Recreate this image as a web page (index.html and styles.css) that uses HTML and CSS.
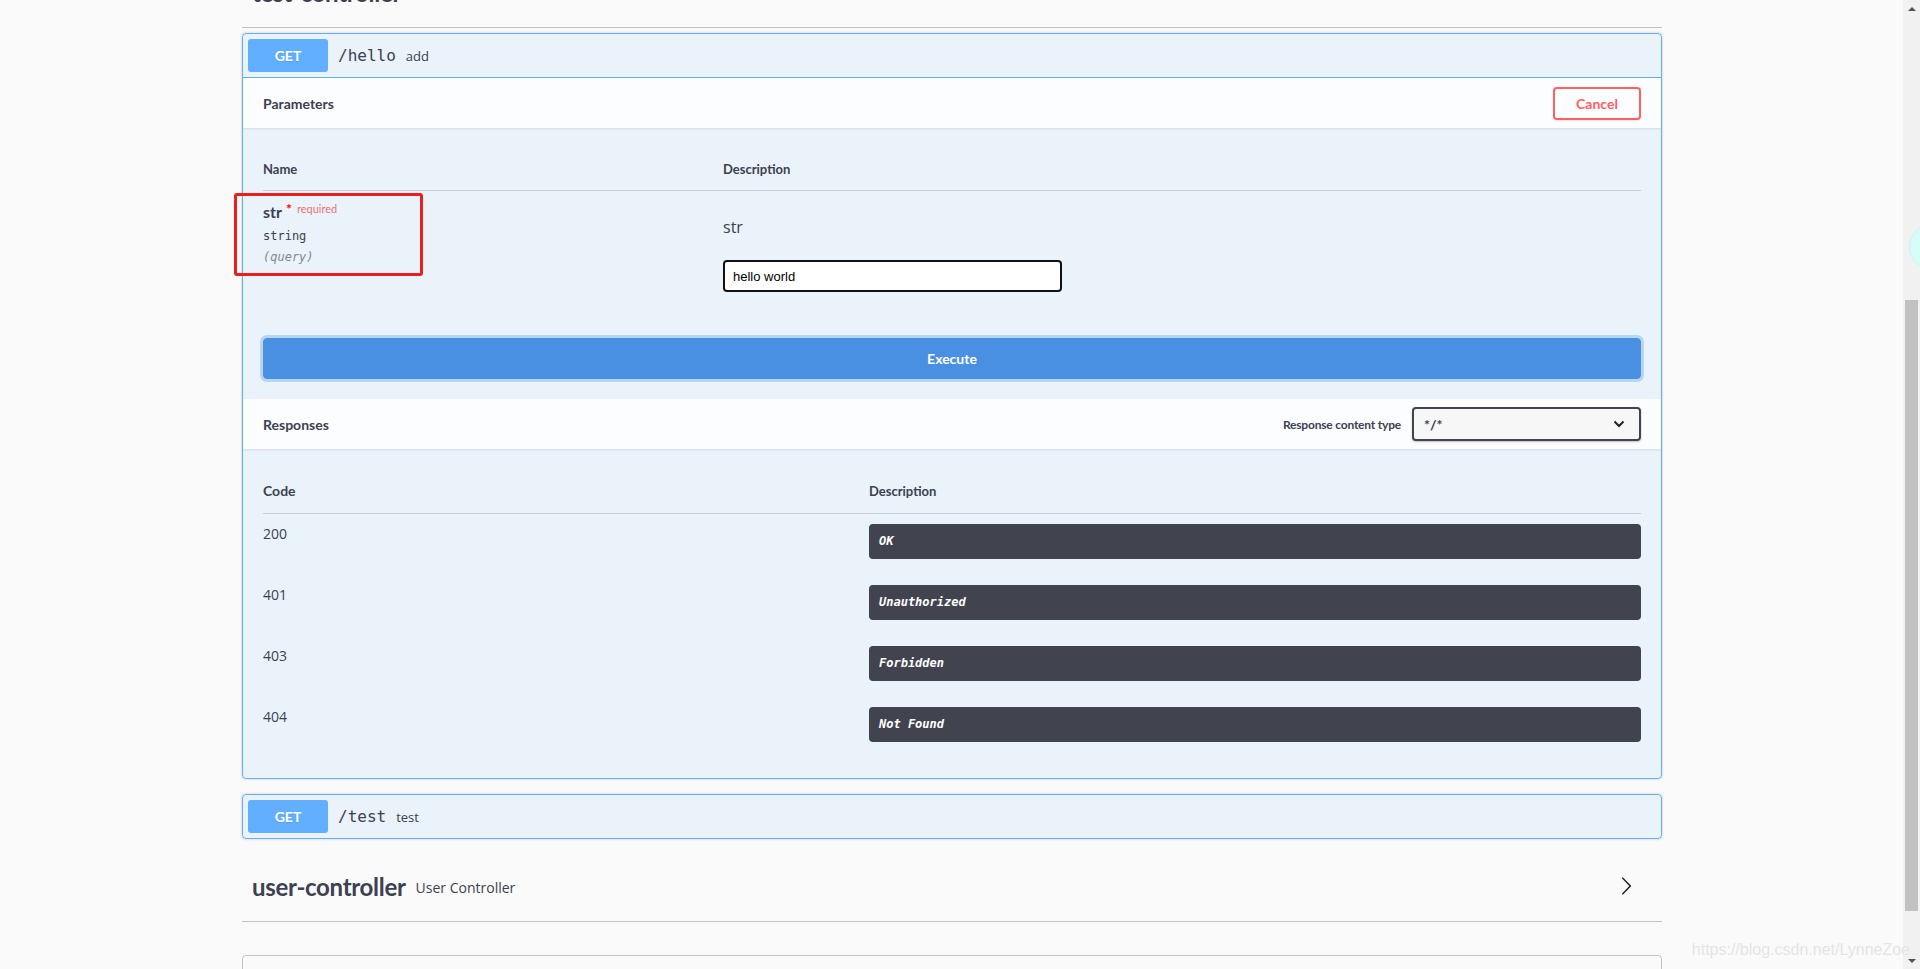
FILE: index.html
```html
<!DOCTYPE html>
<html lang="en">
<head>
<meta charset="utf-8">
<title>Swagger UI</title>
<link rel="stylesheet" href="styles.css">
</head>
<body>
<div class="screen">
  <main class="page">
    <div class="wrapper">
      <section class="tag-section">
        <h4 class="opblock-tag first"><span class="tag-name">test-controller</span></h4>
        <div class="opblock is-open">
          <div class="summary">
            <span class="method">GET</span><span class="path">/hello</span><span class="summary-desc">add</span>
          </div>
          <div class="section-header">
            <h4>Parameters</h4>
            <button class="btn cancel">Cancel</button>
          </div>
          <div class="params">
            <div class="params-head">
              <div>Name</div>
              <div>Description</div>
            </div>
            <div class="param-row">
              <div class="param-name-col">
                <div class="pname">str<span class="star">*</span><span class="req">required</span></div>
                <div class="ptype">string</div>
                <div class="pin">(query)</div>
              </div>
              <div class="param-desc-col">
                <p class="pdesc">str</p>
                <input class="pinput" type="text" value="hello world">
              </div>
            </div>
          </div>
          <div class="execute-wrapper">
            <button class="btn execute">Execute</button>
          </div>
          <div class="section-header">
            <h4>Responses</h4>
            <div class="content-type">
              <span class="ct-label">Response content type</span>
              <div class="select"><span>*/*</span>
                <svg width="12" height="8" viewBox="0 0 12 8"><polyline points="1.5,1.5 6,6 10.5,1.5" fill="none" stroke="#222" stroke-width="2"/></svg>
              </div>
            </div>
          </div>
          <div class="responses">
            <div class="resp-head">
              <div class="rh-code">Code</div>
              <div class="rh-desc">Description</div>
            </div>
            <div class="resp-row"><div class="rcode">200</div><div class="rdesc">OK</div></div>
            <div class="resp-row"><div class="rcode">401</div><div class="rdesc">Unauthorized</div></div>
            <div class="resp-row"><div class="rcode">403</div><div class="rdesc">Forbidden</div></div>
            <div class="resp-row"><div class="rcode">404</div><div class="rdesc">Not Found</div></div>
          </div>
        </div>
        <div class="opblock">
          <div class="summary">
            <span class="method">GET</span><span class="path">/test</span><span class="summary-desc">test</span>
          </div>
        </div>
      </section>
      <section class="tag-section">
        <h4 class="opblock-tag"><span class="tag-name">user-controller</span><small>User Controller</small>
          <svg class="expand" width="20" height="20" viewBox="0 0 20 20"><path d="M13.25 10L6.109 2.58c-.268-.27-.268-.707 0-.979.268-.27.701-.27.969 0l7.83 7.908c.268.271.268.709 0 .979l-7.830 7.908c-.268.271-.701.27-.969 0-.268-.269-.268-.707 0-.979L13.25 10z" fill="#222"/></svg>
        </h4>
      </section>
      <section class="models"></section>
    </div>
    <div class="annotation"></div>
  </main>
  <div class="scrollbar">
    <div class="sb-btn"><span class="tri-up"></span></div>
    <div class="sb-track"><div class="sb-thumb"></div></div>
    <div class="sb-btn"><span class="tri-down"></span></div>
  </div>
  <div class="float-bubble"></div>
  <div class="watermark">https://blog.csdn.net/LynneZoe</div>
</div>
</body>
</html>
```

FILE: styles.css
```css
* { box-sizing: border-box; }

html, body {
  margin: 0;
  padding: 0;
  background: #fafafa;
  overflow: hidden;
}

body {
  font-family: "Open Sans", sans-serif;
  color: #3b4151;
}

.screen {
  position: relative;
  display: flex;
  height: 969px;
  overflow: hidden;
}

.page {
  position: relative;
  flex: 1;
  padding-left: 1px;
  overflow: hidden;
}

.wrapper {
  width: 1420px;
  margin: 0 auto;
}

/* tag headings */
.opblock-tag {
  display: flex;
  align-items: center;
  height: 68px;
  margin: 0 0 5px;
  padding: 10px 20px 12px 10px;
  border-bottom: 1px solid rgba(59, 65, 81, .3);
  font-family: Lato, sans-serif;
  font-weight: 700;
  font-size: 24px;
  letter-spacing: -0.3px;
  color: #3b4151;
}
.opblock-tag.first { margin-top: -40px; }
.opblock-tag small {
  font-family: "Open Sans", sans-serif;
  font-weight: 400;
  font-size: 14px;
  letter-spacing: 0;
  padding: 0 10px;
  margin-top: 1px;
}
.opblock-tag .expand {
  margin-left: auto;
  margin-right: 6px;
  margin-bottom: 2px;
}

/* operation blocks */
.opblock {
  margin: 0 0 15px;
  border: 1px solid #61affe;
  border-radius: 4px;
  background: rgba(97, 175, 254, .1);
  box-shadow: 0 0 3px rgba(0, 0, 0, .19);
}

.summary {
  display: flex;
  align-items: center;
  padding: 5px;
}
.is-open .summary { border-bottom: 1px solid #61affe; }

.method {
  min-width: 80px;
  padding: 6px 15px;
  border-radius: 3px;
  background: #61affe;
  color: #fff;
  text-align: center;
  font-family: Lato, sans-serif;
  font-weight: 700;
  font-size: 14px;
  line-height: 21px;
  text-shadow: 0 1px 0 rgba(0, 0, 0, .1);
}
.path {
  padding: 0 10px;
  font-family: "DejaVu Sans Mono", monospace;
  font-size: 16px;
  line-height: 21px;
  color: #3b4151;
}
.summary-desc {
  font-size: 13px;
  color: #3b4151;
}

.section-header {
  display: flex;
  align-items: center;
  justify-content: space-between;
  min-height: 50px;
  padding: 8px 20px;
  background: rgba(255, 255, 255, .8);
  box-shadow: 0 1px 2px rgba(0, 0, 0, .1);
}
.section-header h4 {
  margin: 0;
  font-family: Lato, sans-serif;
  font-weight: 700;
  font-size: 14px;
  color: #3b4151;
}

.btn {
  font-family: Lato, sans-serif;
  font-weight: 700;
  font-size: 14px;
  border-radius: 4px;
  cursor: pointer;
}
.btn.cancel {
  width: 88px;
  height: 33px;
  padding: 0;
  border: 2px solid #ff6060;
  background: transparent;
  color: #ff6060;
  box-shadow: 0 1px 2px rgba(0, 0, 0, .1);
}

/* parameters */
.params { padding: 20px 20px 20px; }

.params-head {
  display: grid;
  grid-template-columns: 460px 1fr;
  padding: 12px 0;
  border-bottom: 1px solid rgba(59, 65, 81, .2);
  font-family: Lato, sans-serif;
  font-weight: 700;
  font-size: 13px;
  line-height: 18px;
}

.param-row {
  display: grid;
  grid-template-columns: 460px 1fr;
  padding: 10px 0;
}
.pname {
  font-family: Lato, sans-serif;
  font-weight: 700;
  font-size: 16px;
  line-height: 22px;
  color: #3b4151;
}
.star {
  position: relative;
  top: -4px;
  margin-left: 4px;
  font-size: 14px;
  color: red;
}
.req {
  position: relative;
  top: -5px;
  padding-left: 5px;
  font-size: 11px;
  font-weight: 400;
  color: rgba(255, 0, 0, .6);
}
.ptype {
  padding: 2px 0 5px;
  font-family: "DejaVu Sans Mono", monospace;
  font-size: 12px;
  line-height: 18px;
}
.pin {
  font-family: "DejaVu Sans Mono", monospace;
  font-style: italic;
  font-size: 12px;
  line-height: 14px;
  color: #888;
}
.pdesc {
  margin: 15px 0 22px;
  font-size: 16px;
  line-height: 22px;
  color: #3b4151;
}
.pinput {
  display: block;
  width: 339px;
  height: 32px;
  padding: 0 8px;
  border: 2px solid #111;
  border-radius: 4px;
  background: #fff;
  font-family: "Liberation Sans", Arial, sans-serif;
  font-size: 13px;
  color: #000;
  outline: none;
}

.execute-wrapper { padding: 16px 20px 20px; }
.btn.execute {
  display: block;
  width: 100%;
  height: 41px;
  border: 1px solid #4990e2;
  background: #4990e2;
  color: #fff;
  box-shadow: 0 0 0 3px #b9d5f4;
}

/* responses */
.content-type {
  display: flex;
  align-items: center;
}
.ct-label {
  margin-right: 11px;
  font-family: Lato, sans-serif;
  font-weight: 700;
  font-size: 12px;
  letter-spacing: -0.2px;
}
.select {
  display: flex;
  align-items: center;
  justify-content: space-between;
  width: 229px;
  height: 34px;
  padding: 0 14px 0 10px;
  border: 2px solid #41444e;
  border-radius: 4px;
  background: #f7f7f7;
  box-shadow: 0 1px 2px rgba(0, 0, 0, .25);
  font-family: Lato, sans-serif;
  font-weight: 700;
  font-size: 14px;
}

.responses { padding: 20px; }
.resp-head {
  display: grid;
  grid-template-columns: 606px 1fr;
  align-items: center;
  padding: 12px 0;
  border-bottom: 1px solid rgba(59, 65, 81, .2);
  font-family: Lato, sans-serif;
  font-weight: 700;
}
.rh-code { font-size: 14px; line-height: 20px; }
.rh-desc { font-size: 13px; line-height: 20px; }

.resp-row {
  display: grid;
  grid-template-columns: 606px 1fr;
  padding: 10px 0 16px;
}
.rcode {
  font-size: 14px;
  line-height: 20px;
}
.rdesc {
  height: 35px;
  padding: 10px;
  border-radius: 4px;
  background: #41444e;
  color: #fff;
  font-family: "DejaVu Sans Mono", monospace;
  font-weight: 700;
  font-style: italic;
  font-size: 12px;
  line-height: 15px;
}

.models {
  height: 60px;
  margin: 33px 0 30px;
  border: 1px solid rgba(59, 65, 81, .3);
  border-radius: 4px;
}

/* overlays */
.annotation {
  position: absolute;
  left: 234px;
  top: 193px;
  width: 189px;
  height: 83px;
  border: 3px solid #ee1d1d;
  border-radius: 3px;
}

.scrollbar {
  display: flex;
  flex-direction: column;
  width: 17px;
  background: #f1f1f1;
}
.sb-btn {
  display: flex;
  align-items: center;
  justify-content: center;
  height: 17px;
}
.tri-up {
  width: 0; height: 0;
  border-left: 4px solid transparent;
  border-right: 4px solid transparent;
  border-bottom: 4px solid #505050;
}
.tri-down {
  width: 0; height: 0;
  border-left: 4px solid transparent;
  border-right: 4px solid transparent;
  border-top: 4px solid #505050;
}
.sb-track {
  flex: 1;
  padding-top: 283px;
}
.sb-thumb {
  height: 611px;
  margin: 0 2px;
  background: #c1c1c1;
}

.float-bubble {
  position: absolute;
  left: 1909px;
  top: 224px;
  width: 46px;
  height: 46px;
  border-radius: 50%;
  background: #d6fcf8;
  border: 1px solid #c4f6f0;
}

.watermark {
  position: absolute;
  right: 10px;
  top: 940px;
  font-family: "Liberation Sans", Arial, sans-serif;
  font-size: 16px;
  line-height: 20px;
  color: rgba(200, 200, 200, .5);
  text-shadow: 0 0 1px #fff;
}
```
